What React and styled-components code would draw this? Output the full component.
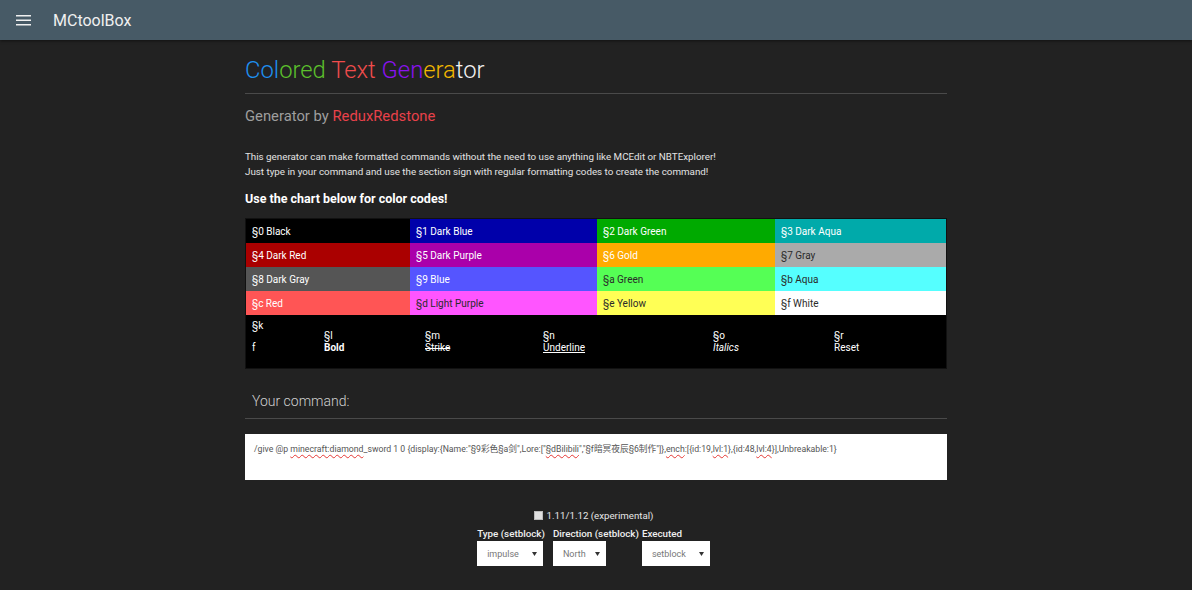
import React from "react";
import styled, { createGlobalStyle } from "styled-components";

const GlobalStyle = createGlobalStyle`
    html, body {
        margin: 0;
        padding: 0;
        background: #222222;
        font-family: Roboto, "Noto Sans CJK SC", sans-serif;
        color: #eeeeee;
    }
`;

const NavBar = styled.header`
    height: 40px;
    background: #475a66;
    display: flex;
    align-items: center;
    box-shadow: 0 1px 3px rgba(0, 0, 0, 0.5);
`;

const MenuButton = styled.div`
    width: 40px;
    display: flex;
    justify-content: center;
    margin-left: 3px;
`;

const Brand = styled.span`
    font-size: 16px;
    color: #f0f0f0;
    margin-left: 10px;
`;

const Page = styled.main`
    width: 702px;
    margin: 0 auto;
    padding-top: 15px;
`;

const Title = styled.h1`
    font-size: 23.8px;
    font-weight: 300;
    margin: 0;
    line-height: 30px;
`;

const Part = styled.span`
    color: ${(p) => p.$color};
`;

const Rule = styled.hr`
    border: 0;
    border-top: 1px solid #4a4a4a;
    margin: ${(p) => p.$margin || "8px 0 0"};
`;

const SubTitle = styled.h2`
    font-size: 14.8px;
    font-weight: 400;
    color: #9e9e9e;
    margin: 12px 0 0;
    line-height: 20px;
`;

const Author = styled.span`
    color: #e8414a;
`;

const Intro = styled.p`
    font-size: 9.8px;
    line-height: 15px;
    color: #e2e2e2;
    margin: 23px 0 0;
`;

const ChartHeading = styled.h3`
    font-size: 12.5px;
    font-weight: 700;
    color: #ffffff;
    margin: 12px 0 0;
    line-height: 16px;
`;

const ColorGrid = styled.div`
    margin-top: 11px;
    display: grid;
    grid-template-columns: 164px 187px 178px 1fr;
    border: 1px solid #111;
    background: #000;
`;

const ColorCell = styled.div`
    height: 24px;
    display: flex;
    align-items: center;
    padding-left: 6px;
    font-size: 10px;
    background: ${(p) => p.$bg};
    color: ${(p) => (p.$dark ? "#2a2a2a" : "#ffffff")};
`;

const FormatRow = styled.div`
    grid-column: 1 / -1;
    height: 53px;
    display: grid;
    grid-template-columns: 72px 101px 118px 170px 121px 1fr;
    font-size: 10px;
    color: #ffffff;
`;

const FormatCell = styled.div`
    padding: 0 6px;
    display: flex;
    flex-direction: column;
    justify-content: ${(p) => (p.$top ? "flex-start" : "center")};
    line-height: ${(p) => (p.$top ? "22px" : "12px")};
`;

const Sample = styled.span`
    font-weight: ${(p) => (p.$bold ? 700 : 400)};
    font-style: ${(p) => (p.$italic ? "italic" : "normal")};
    text-decoration: ${(p) => p.$deco || "none"};
`;

const CommandLabel = styled.div`
    font-size: 14px;
    font-weight: 300;
    color: #d0d0d0;
    padding: 23px 0 0 7px;
    line-height: 18px;
`;

const CommandBox = styled.div`
    margin-top: 15px;
    height: 46px;
    background: #ffffff;
    box-sizing: border-box;
    padding: 8px 9px;
    font-size: 8.7px;
    color: #555555;
    white-space: nowrap;
    overflow: hidden;
`;

const Squiggle = styled.span`
    text-decoration: underline wavy #e53935;
    text-decoration-thickness: 1px;
    text-underline-offset: 2px;
`;

const Options = styled.div`
    margin-top: 30px;
    display: flex;
    flex-direction: column;
    align-items: center;
    padding-right: 5px;
`;

const CheckLine = styled.label`
    display: flex;
    align-items: center;
    gap: 4px;
    font-size: 9.7px;
    color: #e6e6e6;
`;

const Box = styled.span`
    width: 7px;
    height: 7px;
    background: #e0e0e0;
    border: 1px solid #bbb;
`;

const SelectRow = styled.div`
    display: flex;
    margin-top: 7px;
`;

const Field = styled.div`
    display: flex;
    flex-direction: column;
    margin-left: ${(p) => p.$gap || 0}px;
`;

const FieldLabel = styled.span`
    font-size: 9.8px;
    font-weight: 500;
    color: #f0f0f0;
    line-height: 12px;
`;

const FakeSelect = styled.div`
    width: ${(p) => p.$w}px;
    height: 25px;
    background: #ffffff;
    display: flex;
    align-items: center;
    justify-content: space-between;
    box-sizing: border-box;
    padding: 0 6px 0 10px;
    font-size: 9px;
    color: #777;
    margin-top: 1px;
`;

const Caret = styled.svg`
    width: 5px;
    height: 4px;
`;

const colors = [
    ["§0 Black", "#000000"],
    ["§1 Dark Blue", "#0000aa"],
    ["§2 Dark Green", "#00aa00"],
    ["§3 Dark Aqua", "#00aaaa"],
    ["§4 Dark Red", "#aa0000"],
    ["§5 Dark Purple", "#aa00aa"],
    ["§6 Gold", "#ffaa00"],
    ["§7 Gray", "#aaaaaa", true],
    ["§8 Dark Gray", "#555555"],
    ["§9 Blue", "#5555ff"],
    ["§a Green", "#55ff55", true],
    ["§b Aqua", "#55ffff", true],
    ["§c Red", "#ff5555"],
    ["§d Light Purple", "#ff55ff", true],
    ["§e Yellow", "#ffff55", true],
    ["§f White", "#ffffff", true],
];

const formats = [
    { code: "§l", label: "Bold", bold: true },
    { code: "§m", label: "Strike", deco: "line-through" },
    { code: "§n", label: "Underline", deco: "underline" },
    { code: "§o", label: "Italics", italic: true },
    { code: "§r", label: "Reset" },
];

function Hamburger() {
    return (
        <svg width="15" height="12" viewBox="0 0 15 12">
            <rect x="0" y="1" width="15" height="1.5" fill="#f0f0f0" />
            <rect x="0" y="5.5" width="15" height="1.5" fill="#f0f0f0" />
            <rect x="0" y="10" width="15" height="1.5" fill="#f0f0f0" />
        </svg>
    );
}

function Select({ width, value }) {
    return (
        <FakeSelect $w={width}>
            {value}
            <Caret viewBox="0 0 5 4"><path d="M0 0H5L2.5 4Z" fill="#333" /></Caret>
        </FakeSelect>
    );
}

function App() {
    return (
        <>
            <GlobalStyle />
            <NavBar>
                <MenuButton><Hamburger /></MenuButton>
                <Brand>MCtoolBox</Brand>
            </NavBar>
            <Page>
                <Title>
                    <Part $color="#1e8ff0">Col</Part>
                    <Part $color="#5cc02c">ored </Part>
                    <Part $color="#f04c4c">Text </Part>
                    <Part $color="#8a12f0">Gen</Part>
                    <Part $color="#f2b800">era</Part>
                    <Part $color="#f2f2f2">tor</Part>
                </Title>
                <Rule />
                <SubTitle>Generator by <Author>ReduxRedstone</Author></SubTitle>
                <Intro>
                    This generator can make formatted commands without the need to use anything like MCEdit or NBTExplorer!<br />
                    Just type in your command and use the section sign with regular formatting codes to create the command!
                </Intro>
                <ChartHeading>Use the chart below for color codes!</ChartHeading>
                <ColorGrid>
                    {colors.map(([name, bg, dark]) => (
                        <ColorCell key={name} $bg={bg} $dark={dark}>{name}</ColorCell>
                    ))}
                    <FormatRow>
                        <FormatCell $top>
                            <span>§k</span>
                            <span>f</span>
                        </FormatCell>
                        {formats.map((f) => (
                            <FormatCell key={f.code}>
                                <span>{f.code}</span>
                                <Sample $bold={f.bold} $italic={f.italic} $deco={f.deco}>{f.label}</Sample>
                            </FormatCell>
                        ))}
                    </FormatRow>
                </ColorGrid>
                <CommandLabel>Your command:</CommandLabel>
                <Rule $margin="8px 0 0" />
                <CommandBox>
                    /give @p <Squiggle>minecraft:diamond</Squiggle>_sword 1 0 {"{display:{Name:\"§9彩色§a剑\",Lore:[\""}
                    <Squiggle>§dBilibili</Squiggle>
                    {"\",\"§f暗冥夜辰§6制作\"]},"}
                    <Squiggle>ench</Squiggle>
                    {":[{id:19,"}<Squiggle>lvl:1</Squiggle>{"},{id:48,"}<Squiggle>lvl:4</Squiggle>{"}],Unbreakable:1}"}
                </CommandBox>
                <Options>
                    <CheckLine><Box />1.11/1.12 (experimental)</CheckLine>
                    <SelectRow>
                        <Field>
                            <FieldLabel>Type (setblock)</FieldLabel>
                            <Select width={66} value="impulse" />
                        </Field>
                        <Field $gap={8}>
                            <FieldLabel>Direction (setblock)</FieldLabel>
                            <Select width={53} value="North" />
                        </Field>
                        <Field $gap={3}>
                            <FieldLabel>Executed</FieldLabel>
                            <Select width={68} value="setblock" />
                        </Field>
                    </SelectRow>
                </Options>
            </Page>
        </>
    );
}

export default App;
